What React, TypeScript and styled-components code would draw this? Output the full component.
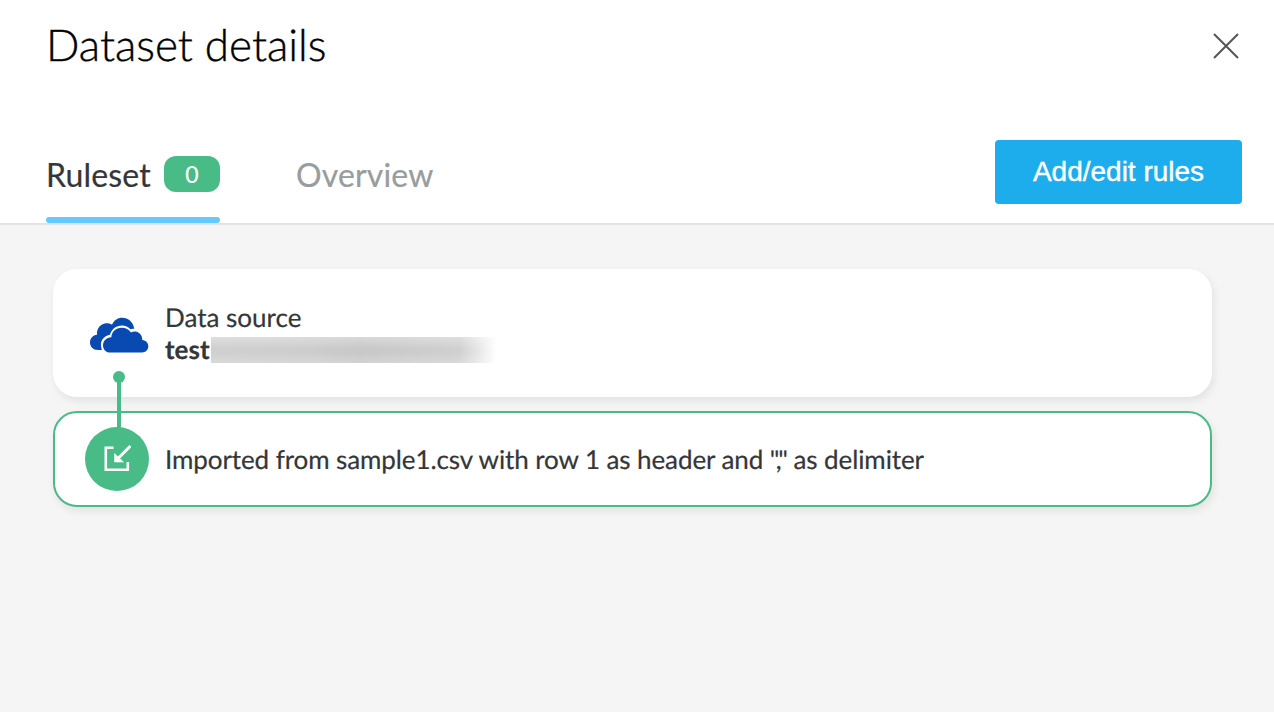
import { useState } from "react";
import styled, { createGlobalStyle, ThemeProvider } from "styled-components";

const theme = {
	textColor: "#343637",
	mutedColor: "#999c9d",
	green: "#48bb87",
	blue: "#1eadec",
	underline: "#66caff",
	bgColor: "#f5f5f5",
};

const GlobalStyle = createGlobalStyle`
	* {
		box-sizing: border-box;
	}
	body {
		margin: 0;
		font-family: Lato, "Liberation Sans", sans-serif;
		color: #343637;
		background-color: #f5f5f5;
		text-rendering: geometricPrecision;
	}
`;

const Container = styled.div`
	height: 712px;
	display: flex;
	flex-direction: column;
	overflow: hidden;
	background-color: ${(props) => props.theme.bgColor};
`;

const Header = styled.header`
	height: 92px;
	display: flex;
	justify-content: space-between;
	align-items: center;
	padding: 0 35px 0 46px;
	background-color: white;
`;

const Title = styled.h1`
	margin: 0 0 2px;
	font-size: 44px;
	line-height: 54px;
	font-weight: 300;
	-webkit-text-stroke: 0.4px black;
	color: black;
	white-space: nowrap;
`;

const CloseButton = styled.button`
	display: flex;
	padding: 0;
	border: none;
	background: none;
	cursor: pointer;
`;

const TabBar = styled.div`
	height: 133px;
	display: flex;
	justify-content: space-between;
	align-items: flex-end;
	padding: 0 32px 0 46px;
	border-bottom: 2px solid #e2e2e2;
	background-color: white;
`;

const Tabs = styled.nav`
	display: flex;
	gap: 76px;
`;

const TabColumn = styled.div<{ $width: number }>`
	width: ${(props) => props.$width}px;
	height: 83px;
	display: flex;
	flex-direction: column;
	justify-content: space-between;
`;

const Tab = styled.button<{ $isActive: boolean }>`
	height: 60px;
	display: flex;
	justify-content: space-between;
	align-items: flex-start;
	padding: 15px 0 0;
	border: none;
	background: none;
	font-family: inherit;
	font-size: 32px;
	line-height: 40px;
	letter-spacing: 0.15px;
	-webkit-text-stroke: 0.2px currentColor;
	color: ${(props) =>
		props.$isActive ? props.theme.textColor : props.theme.mutedColor};
	cursor: pointer;
`;

const Underline = styled.div`
	height: 6px;
	border-radius: 3px;
	background-color: ${(props) => props.theme.underline};
`;

const Badge = styled.span`
	width: 56px;
	height: 36px;
	margin-top: 1px;
	border-radius: 12px;
	background-color: ${(props) => props.theme.green};
	color: white;
	font-size: 23px;
	line-height: 36px;
	text-align: center;
`;

const RulesButton = styled.button`
	width: 247px;
	height: 64px;
	margin-bottom: 19px;
	padding: 0;
	border: none;
	border-radius: 4px;
	background-color: ${(props) => props.theme.blue};
	color: white;
	font-family: "Liberation Sans", Arial, sans-serif;
	font-size: 28px;
	-webkit-text-stroke: 0.4px white;
	cursor: pointer;
`;

const Steps = styled.main`
	display: flex;
	flex-direction: column;
	gap: 14px;
	padding: 44px 62px 0 53px;
`;

const Card = styled.section<{ $height: number; $outlined?: boolean }>`
	height: ${(props) => props.$height}px;
	display: flex;
	align-items: center;
	gap: 16px;
	padding-left: ${(props) => (props.$outlined ? 30 : 32)}px;
	border: ${(props) =>
		props.$outlined ? `2px solid ${props.theme.green}` : "none"};
	border-radius: 24px;
	background-color: white;
	box-shadow: 2px 4px 8px rgba(0, 0, 0, 0.08);
	font-size: 26px;
	line-height: 32px;
	white-space: nowrap;
`;

const IconSlot = styled.div`
	width: 64px;
	display: flex;
	justify-content: center;
	padding: 3px 0 0 4px;
`;

const StepIcon = styled.div`
	position: relative;
	width: 64px;
	height: 64px;
	display: flex;
	justify-content: center;
	align-items: center;
	border-radius: 50%;
	background-color: ${(props) => props.theme.green};
`;

const Connector = styled.div`
	position: absolute;
	left: 32px;
	top: -50px;
	width: 4px;
	height: 54px;
	background-color: ${(props) => props.theme.green};
	&::before {
		content: "";
		position: absolute;
		left: -4px;
		top: -6px;
		width: 12px;
		height: 12px;
		border-radius: 50%;
		background-color: ${(props) => props.theme.green};
	}
`;

const StepText = styled.span`
	letter-spacing: -0.09px;
	-webkit-text-stroke: 0.2px currentColor;
`;

const Delimiter = styled.span`
	letter-spacing: -0.9px;
`;

const Source = styled.div`
	-webkit-text-stroke: 0.2px currentColor;
`;

const Account = styled.div`
	height: 32px;
	display: flex;
	align-items: flex-start;
	font-weight: 700;
`;

const Redacted = styled.span`
	width: 285px;
	height: 26px;
	margin: 4px 0 0 1px;
	background: linear-gradient(
			to bottom,
			rgba(255, 255, 255, 0.3),
			transparent 45%,
			transparent 60%,
			rgba(255, 255, 255, 0.2)
		),
		linear-gradient(
			to right,
			#d0d0d0 0%,
			#cdcdcd 34%,
			#c8c8c8 52%,
			#cdcdcd 75%,
			#d0d0d0 87%,
			#e4e4e4 93%,
			rgba(255, 255, 255, 0) 100%
		);
`;

function CloudIcon() {
	return (
		<svg width="60" height="38" viewBox="0 0 60 38">
			<path
				fill="#094ab2"
				d="M13 34H9C4 34 1 30.500 1 26.500C1 22.500 4 19.200 8 18.800C7.500 12 12 7.500 17.500 7.300C19.500 7.200 21.500 7.900 23 8.700C25 4.500 28.500 1.800 33 1.800C39.500 1.800 44.300 6.300 45.300 12.800C43.500 12.500 42.300 12.800 41.500 13.300C39.500 10.800 36.500 9.500 33 9.500C27 9.500 22.500 13.300 21 18.800C15.500 20 12 23.500 12 28.500C12 30.500 12.300 32.500 13 34Z"
			/>
			<path
				fill="#094ab2"
				d="M20 36.500C16.500 36 14 33 14 29.200C14 24.800 17.500 21.500 22.300 21.200C22.600 15.800 27 11.800 32.700 11.800C36.700 11.800 40 13.700 42 16.500C43.200 15.700 44.800 15.200 46.500 15.500C50.500 16 53.400 19.500 53.300 24C57 24.500 59.300 27 59.300 30.300C59.300 33.800 56.600 36.500 53 36.500Z"
			/>
		</svg>
	);
}

function ImportIcon() {
	return (
		<svg width="28" height="28" viewBox="0 0 28 28" fill="none">
			<path
				d="M10.500 2.800H2.800V24.800H24.800V17"
				stroke="white"
				strokeWidth="2.600"
			/>
			<path d="M27.500 1L15 13.500" stroke="white" strokeWidth="3" />
			<path
				d="M11.500 8.500V17H20.500Z"
				fill="white"
				stroke="white"
				strokeWidth="0.600"
				strokeLinejoin="round"
			/>
		</svg>
	);
}

export default function App() {
	const [tab, setTab] = useState("ruleset");
	return (
		<ThemeProvider theme={theme}>
			<GlobalStyle />
			<Container>
				<Header>
					<Title>Dataset details</Title>
					<CloseButton aria-label="Close">
						<svg width="26" height="26" viewBox="0 0 26 26">
							<path
								d="M1 1L25 25M25 1L1 25"
								stroke="#555"
								strokeWidth="2"
							/>
						</svg>
					</CloseButton>
				</Header>
				<TabBar>
					<Tabs>
						<TabColumn $width={174}>
							<Tab
								$isActive={tab === "ruleset"}
								onClick={() => setTab("ruleset")}
							>
								Ruleset
								<Badge>0</Badge>
							</Tab>
							{tab === "ruleset" && <Underline />}
						</TabColumn>
						<TabColumn $width={138}>
							<Tab
								$isActive={tab === "overview"}
								onClick={() => setTab("overview")}
							>
								Overview
							</Tab>
							{tab === "overview" && <Underline />}
						</TabColumn>
					</Tabs>
					<RulesButton>Add/edit rules</RulesButton>
				</TabBar>
				<Steps>
					<Card $height={128}>
						<IconSlot>
							<CloudIcon />
						</IconSlot>
						<Source>
							<div>Data source</div>
							<Account>
								test
								<Redacted />
							</Account>
						</Source>
					</Card>
					<Card $height={96} $outlined>
						<StepIcon>
							<Connector />
							<ImportIcon />
						</StepIcon>
						<StepText>
							Imported from sample1.csv with row 1 as header and{" "}
							<Delimiter>","</Delimiter> as delimiter
						</StepText>
					</Card>
				</Steps>
			</Container>
		</ThemeProvider>
	);
}
